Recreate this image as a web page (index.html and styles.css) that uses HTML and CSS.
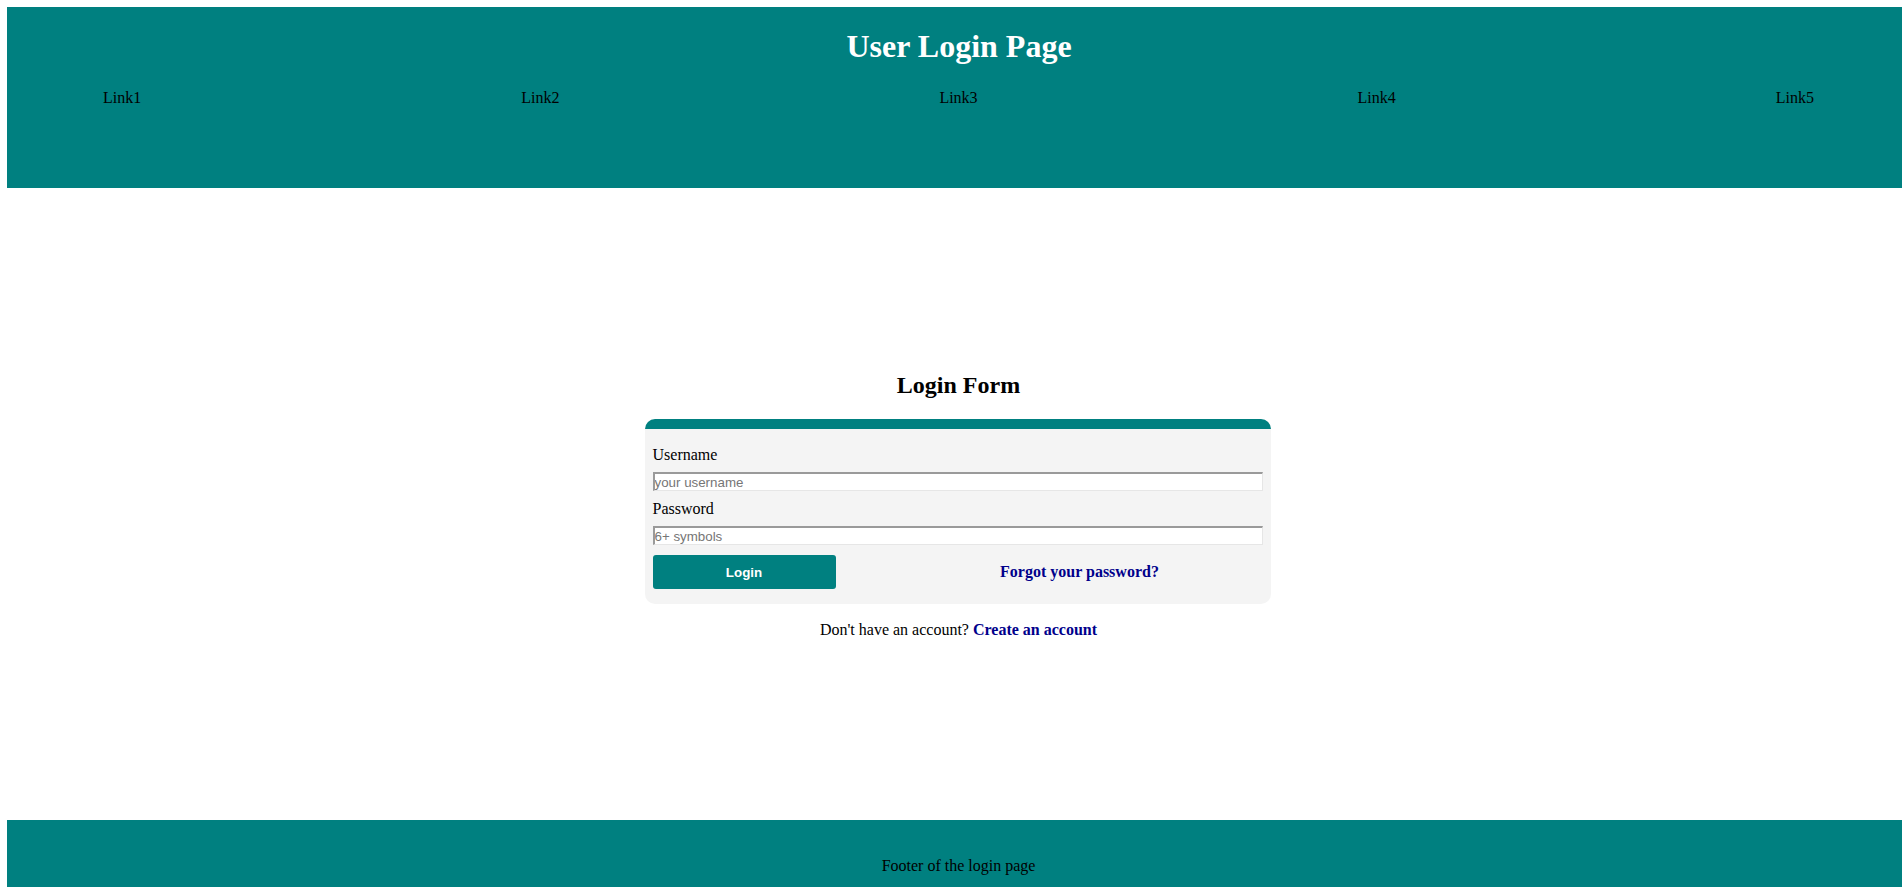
FILE: index.html
```html
<!DOCTYPE html>
<html lang="en">
<head>
<meta charset="utf-8">
<title>User Login Page</title>
<link rel="stylesheet" href="styles.css">
</head>
<body>
<header class="site-header">
  <h1 class="site-title">User Login Page</h1>
  <nav class="site-nav">
    <a href="#">Link1</a>
    <a href="#">Link2</a>
    <a href="#">Link3</a>
    <a href="#">Link4</a>
    <a href="#">Link5</a>
  </nav>
</header>
<main class="main">
  <h2 class="form-title">Login Form</h2>
  <form class="card">
    <label class="field-label" for="username">Username</label>
    <input class="field-input" id="username" type="text" placeholder="your username">
    <label class="field-label" for="password">Password</label>
    <input class="field-input" id="password" type="password" placeholder="6+ symbols">
    <div class="actions">
      <button class="login-btn" type="button">Login</button>
      <div class="forgot-wrap"><a class="strong-link" href="#">Forgot your password?</a></div>
    </div>
  </form>
  <p class="signup">Don't have an account? <a class="strong-link" href="#">Create an account</a></p>
</main>
<footer class="site-footer">
  <p class="footer-text">Footer of the login page</p>
</footer>
</body>
</html>
```

FILE: styles.css
```css
html, body {
  background: #ffffff;
}
body {
  margin: 7px 1px 0 7px;
  font-family: "Liberation Serif", "Times New Roman", serif;
  font-size: 16px;
  color: #000;
}
.site-header {
  background: #008080;
  padding: 21px 0 81px 0;
}
.site-title {
  margin: 0;
  padding-left: 9px;
  font-size: 32px;
  line-height: 37px;
  font-weight: bold;
  color: #ffffff;
  text-align: center;
}
.site-nav {
  margin-top: 24px;
  display: flex;
  justify-content: space-between;
  padding: 0 88px 0 96px;
  line-height: 18px;
}
.site-nav a {
  color: #000;
  text-decoration: none;
}
.main {
  height: 632px;
  box-sizing: border-box;
  padding-left: 8px;
  display: flex;
  flex-direction: column;
  justify-content: center;
  align-items: center;
}
.form-title {
  margin: 19.92px 0;
  font-size: 24px;
  font-weight: bold;
}
.card {
  width: 626px;
  margin-right: 2px;
  box-sizing: border-box;
  background: #f4f4f4;
  border-top: 10px solid #008080;
  border-radius: 10px;
  padding: 17px 8px 15px 8px;
  display: flex;
  flex-direction: column;
}
.field-label {
  display: block;
  line-height: 18px;
  margin-bottom: 8px;
}
.field-input {
  display: block;
  width: 100%;
  height: 19px;
  box-sizing: border-box;
  margin: 0 0 9px 0;
  padding: 0;
  border-width: 2px 1px 1px 2px;
  border-style: solid;
  border-color: #9a9a9a #e6e6e6 #e6e6e6 #9a9a9a;
  background: #ffffff;
  font-family: "Liberation Sans", Arial, sans-serif;
  font-size: 13.33px;
  color: #000;
}
.field-input::placeholder {
  color: #767676;
}
.actions {
  margin-top: 1px;
  display: flex;
  justify-content: space-between;
  align-items: center;
}
.login-btn {
  width: 30%;
  height: 34px;
  border: none;
  border-radius: 3px;
  background: #008080;
  color: #ffffff;
  font-family: "Liberation Sans", Arial, sans-serif;
  font-size: 13.33px;
  font-weight: bold;
  cursor: pointer;
}
.forgot-wrap {
  width: 60%;
  text-align: center;
}
.strong-link {
  color: #00008b;
  font-weight: bold;
  text-decoration: none;
}
.signup {
  margin: 17px 0 16px 0;
  line-height: 18.4px;
}
.site-footer {
  background: #008080;
  padding: 37px 0 12px 8px;
}
.footer-text {
  margin: 0;
  line-height: 18px;
  text-align: center;
}
```
